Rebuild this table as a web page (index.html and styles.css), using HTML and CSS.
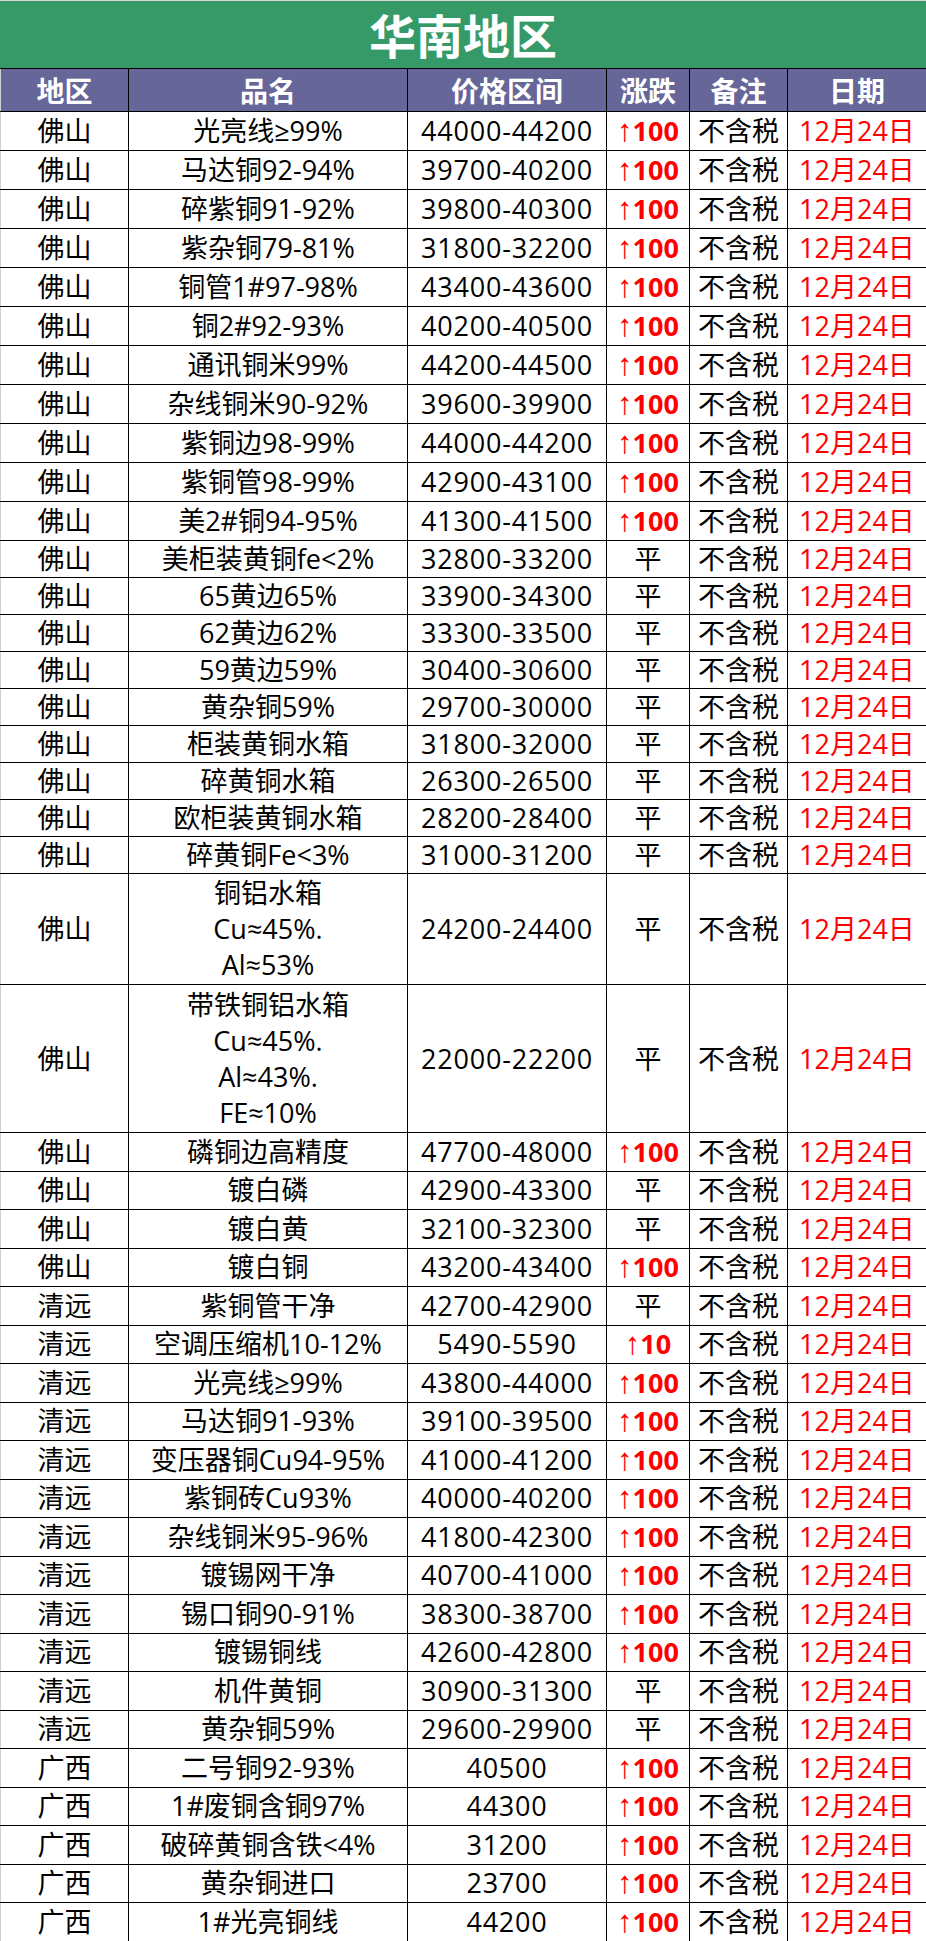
FILE: index.html
```html
<!DOCTYPE html>
<html lang="zh-CN">
<head>
<meta charset="utf-8">
<title>华南地区</title>
<link rel="stylesheet" href="styles.css">
</head>
<body>
<div class="sheet">
  <div class="title">华南地区</div>
  <table class="grid">
    <colgroup>
      <col class="c-area"><col class="c-name"><col class="c-price"><col class="c-chg"><col class="c-note"><col class="c-date">
    </colgroup>
    <thead>
      <tr class="head"><th>地区</th><th>品名</th><th>价格区间</th><th>涨跌</th><th>备注</th><th>日期</th></tr>
    </thead>
    <tbody>
      <tr class="h39"><td>佛山</td><td>光亮线≥99%</td><td class="price">44000-44200</td><td class="up"><span class="arr">↑</span>100</td><td>不含税</td><td class="date">12月24日</td></tr>
      <tr class="h39"><td>佛山</td><td>马达铜92-94%</td><td class="price">39700-40200</td><td class="up"><span class="arr">↑</span>100</td><td>不含税</td><td class="date">12月24日</td></tr>
      <tr class="h39"><td>佛山</td><td>碎紫铜91-92%</td><td class="price">39800-40300</td><td class="up"><span class="arr">↑</span>100</td><td>不含税</td><td class="date">12月24日</td></tr>
      <tr class="h39"><td>佛山</td><td>紫杂铜79-81%</td><td class="price">31800-32200</td><td class="up"><span class="arr">↑</span>100</td><td>不含税</td><td class="date">12月24日</td></tr>
      <tr class="h39"><td>佛山</td><td>铜管1#97-98%</td><td class="price">43400-43600</td><td class="up"><span class="arr">↑</span>100</td><td>不含税</td><td class="date">12月24日</td></tr>
      <tr class="h39"><td>佛山</td><td>铜2#92-93%</td><td class="price">40200-40500</td><td class="up"><span class="arr">↑</span>100</td><td>不含税</td><td class="date">12月24日</td></tr>
      <tr class="h39"><td>佛山</td><td>通讯铜米99%</td><td class="price">44200-44500</td><td class="up"><span class="arr">↑</span>100</td><td>不含税</td><td class="date">12月24日</td></tr>
      <tr class="h39"><td>佛山</td><td>杂线铜米90-92%</td><td class="price">39600-39900</td><td class="up"><span class="arr">↑</span>100</td><td>不含税</td><td class="date">12月24日</td></tr>
      <tr class="h39"><td>佛山</td><td>紫铜边98-99%</td><td class="price">44000-44200</td><td class="up"><span class="arr">↑</span>100</td><td>不含税</td><td class="date">12月24日</td></tr>
      <tr class="h39"><td>佛山</td><td>紫铜管98-99%</td><td class="price">42900-43100</td><td class="up"><span class="arr">↑</span>100</td><td>不含税</td><td class="date">12月24日</td></tr>
      <tr class="h39"><td>佛山</td><td>美2#铜94-95%</td><td class="price">41300-41500</td><td class="up"><span class="arr">↑</span>100</td><td>不含税</td><td class="date">12月24日</td></tr>
      <tr class="h37"><td>佛山</td><td>美柜装黄铜fe&lt;2%</td><td class="price">32800-33200</td><td>平</td><td>不含税</td><td class="date">12月24日</td></tr>
      <tr class="h37"><td>佛山</td><td>65黄边65%</td><td class="price">33900-34300</td><td>平</td><td>不含税</td><td class="date">12月24日</td></tr>
      <tr class="h37"><td>佛山</td><td>62黄边62%</td><td class="price">33300-33500</td><td>平</td><td>不含税</td><td class="date">12月24日</td></tr>
      <tr class="h37"><td>佛山</td><td>59黄边59%</td><td class="price">30400-30600</td><td>平</td><td>不含税</td><td class="date">12月24日</td></tr>
      <tr class="h37"><td>佛山</td><td>黄杂铜59%</td><td class="price">29700-30000</td><td>平</td><td>不含税</td><td class="date">12月24日</td></tr>
      <tr class="h37"><td>佛山</td><td>柜装黄铜水箱</td><td class="price">31800-32000</td><td>平</td><td>不含税</td><td class="date">12月24日</td></tr>
      <tr class="h37"><td>佛山</td><td>碎黄铜水箱</td><td class="price">26300-26500</td><td>平</td><td>不含税</td><td class="date">12月24日</td></tr>
      <tr class="h37"><td>佛山</td><td>欧柜装黄铜水箱</td><td class="price">28200-28400</td><td>平</td><td>不含税</td><td class="date">12月24日</td></tr>
      <tr class="h37"><td>佛山</td><td>碎黄铜Fe&lt;3%</td><td class="price">31000-31200</td><td>平</td><td>不含税</td><td class="date">12月24日</td></tr>
      <tr class="h111"><td>佛山</td><td>铜铝水箱<br>Cu≈45%.<br>Al≈53%</td><td class="price">24200-24400</td><td>平</td><td>不含税</td><td class="date">12月24日</td></tr>
      <tr class="h148"><td>佛山</td><td>带铁铜铝水箱<br>Cu≈45%.<br>Al≈43%.<br>FE≈10%</td><td class="price">22000-22200</td><td>平</td><td>不含税</td><td class="date">12月24日</td></tr>
      <tr class="h385"><td>佛山</td><td>磷铜边高精度</td><td class="price">47700-48000</td><td class="up"><span class="arr">↑</span>100</td><td>不含税</td><td class="date">12月24日</td></tr>
      <tr class="h385"><td>佛山</td><td>镀白磷</td><td class="price">42900-43300</td><td>平</td><td>不含税</td><td class="date">12月24日</td></tr>
      <tr class="h385"><td>佛山</td><td>镀白黄</td><td class="price">32100-32300</td><td>平</td><td>不含税</td><td class="date">12月24日</td></tr>
      <tr class="h385"><td>佛山</td><td>镀白铜</td><td class="price">43200-43400</td><td class="up"><span class="arr">↑</span>100</td><td>不含税</td><td class="date">12月24日</td></tr>
      <tr class="h385"><td>清远</td><td>紫铜管干净</td><td class="price">42700-42900</td><td>平</td><td>不含税</td><td class="date">12月24日</td></tr>
      <tr class="h385"><td>清远</td><td>空调压缩机10-12%</td><td class="price">5490-5590</td><td class="up"><span class="arr">↑</span>10</td><td>不含税</td><td class="date">12月24日</td></tr>
      <tr class="h385"><td>清远</td><td>光亮线≥99%</td><td class="price">43800-44000</td><td class="up"><span class="arr">↑</span>100</td><td>不含税</td><td class="date">12月24日</td></tr>
      <tr class="h385"><td>清远</td><td>马达铜91-93%</td><td class="price">39100-39500</td><td class="up"><span class="arr">↑</span>100</td><td>不含税</td><td class="date">12月24日</td></tr>
      <tr class="h385"><td>清远</td><td>变压器铜Cu94-95%</td><td class="price">41000-41200</td><td class="up"><span class="arr">↑</span>100</td><td>不含税</td><td class="date">12月24日</td></tr>
      <tr class="h385"><td>清远</td><td>紫铜砖Cu93%</td><td class="price">40000-40200</td><td class="up"><span class="arr">↑</span>100</td><td>不含税</td><td class="date">12月24日</td></tr>
      <tr class="h385"><td>清远</td><td>杂线铜米95-96%</td><td class="price">41800-42300</td><td class="up"><span class="arr">↑</span>100</td><td>不含税</td><td class="date">12月24日</td></tr>
      <tr class="h385"><td>清远</td><td>镀锡网干净</td><td class="price">40700-41000</td><td class="up"><span class="arr">↑</span>100</td><td>不含税</td><td class="date">12月24日</td></tr>
      <tr class="h385"><td>清远</td><td>锡口铜90-91%</td><td class="price">38300-38700</td><td class="up"><span class="arr">↑</span>100</td><td>不含税</td><td class="date">12月24日</td></tr>
      <tr class="h385"><td>清远</td><td>镀锡铜线</td><td class="price">42600-42800</td><td class="up"><span class="arr">↑</span>100</td><td>不含税</td><td class="date">12月24日</td></tr>
      <tr class="h385"><td>清远</td><td>机件黄铜</td><td class="price">30900-31300</td><td>平</td><td>不含税</td><td class="date">12月24日</td></tr>
      <tr class="h385"><td>清远</td><td>黄杂铜59%</td><td class="price">29600-29900</td><td>平</td><td>不含税</td><td class="date">12月24日</td></tr>
      <tr class="h385"><td>广西</td><td>二号铜92-93%</td><td class="price">40500</td><td class="up"><span class="arr">↑</span>100</td><td>不含税</td><td class="date">12月24日</td></tr>
      <tr class="h385"><td>广西</td><td>1#废铜含铜97%</td><td class="price">44300</td><td class="up"><span class="arr">↑</span>100</td><td>不含税</td><td class="date">12月24日</td></tr>
      <tr class="h385"><td>广西</td><td>破碎黄铜含铁&lt;4%</td><td class="price">31200</td><td class="up"><span class="arr">↑</span>100</td><td>不含税</td><td class="date">12月24日</td></tr>
      <tr class="h385"><td>广西</td><td>黄杂铜进口</td><td class="price">23700</td><td class="up"><span class="arr">↑</span>100</td><td>不含税</td><td class="date">12月24日</td></tr>
      <tr class="h385"><td>广西</td><td>1#光亮铜线</td><td class="price">44200</td><td class="up"><span class="arr">↑</span>100</td><td>不含税</td><td class="date">12月24日</td></tr>
    </tbody>
  </table>
</div>
</body>
</html>
```

FILE: styles.css
```css
html, body {
  margin: 0;
  padding: 0;
  background: #ffffff;
}

.sheet {
  width: 926px;
  font-family: "Open Sans", "Noto Sans CJK SC", sans-serif;
  color: #000000;
}

.title {
  box-sizing: border-box;
  height: 68px;
  background: #369a68;
  border-top: 1px solid #d9d9d9;
  color: #ffffff;
  font-family: "Noto Sans CJK SC", sans-serif;
  font-weight: 700;
  font-size: 47px;
  line-height: 66px;
  text-align: center;
}

.grid {
  width: 926px;
  table-layout: fixed;
  border-collapse: collapse;
}

.c-area { width: 128px; }
.c-name { width: 279px; }
.c-price { width: 199px; }
.c-chg { width: 83px; }
.c-note { width: 98px; }
.c-date { width: 139px; }

.grid th,
.grid td {
  border: 1px solid #000000;
  padding: 0;
  text-align: center;
  vertical-align: middle;
  white-space: nowrap;
}

.grid tr > :first-child {
  border-left-color: #d0d0d0;
}

.head {
  height: 43px;
  background: #666699;
}

.head th {
  color: #ffffff;
  font-family: "Noto Sans CJK SC", sans-serif;
  font-weight: 700;
  font-size: 28px;
  line-height: 38px;
}

.grid td {
  font-size: 27px;
  line-height: 34px;
}

.h39 { height: 39px; }
.h37 { height: 37px; }
.h111 { height: 111px; }
.h148 { height: 148px; }
.h385 { height: 38.5px; }

.h111 td,
.h148 td {
  line-height: 36px;
}

.price {
  letter-spacing: 0.8px;
}

.up {
  color: #ff0000;
  font-weight: 700;
}

.arr {
  font-family: "Liberation Sans", sans-serif;
  font-weight: 400;
  font-size: 31px;
  letter-spacing: 0;
}

.date {
  color: #ff0000;
}
```
